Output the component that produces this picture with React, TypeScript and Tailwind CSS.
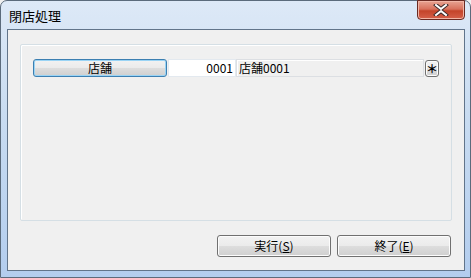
import React from 'react'

const jp = { fontFamily: '"MS UI Gothic", "Noto Sans CJK JP", sans-serif' }

function WinButton({ children, className = '', focused = false }: { children: React.ReactNode; className?: string; focused?: boolean }) {
  return (
    <button
      className={`flex items-center justify-center rounded-[3px] border text-[12px] text-black ${
        focused ? 'border-[#3c7fb1] shadow-[inset_0_0_0_1px_#9ad4f5]' : 'border-[#707070] shadow-[inset_0_0_0_1px_#fcfcfc]'
      } bg-[linear-gradient(to_bottom,#f2f2f2_0%,#ebebeb_48%,#dddddd_52%,#cfcfcf_100%)] ${className}`}
      style={jp}
    >
      {children}
    </button>
  )
}

export default function App() {
  return (
    <div className="w-[471px] h-[278px] bg-[#f0f0f0]">
      <div className="flex h-full w-full flex-col rounded-t-[7px] border border-[#5b6b7c] bg-[linear-gradient(to_bottom,#dde9f7_0%,#c9dcf1_40%,#b3cdee_100%)] pl-[6px] pr-[5px] pb-[6px]">
        {/* title bar */}
        <div className="relative flex h-[28px] shrink-0 items-center">
          <span className="pl-[2px] pt-[1px] text-[13px] text-black" style={jp}>
            閉店処理
          </span>
          <div className="absolute right-[0px] top-[-1px] flex h-[20px] w-[48px] items-center justify-center rounded-b-[4px] border border-[#6a2a22] bg-[linear-gradient(to_bottom,#e8a493_0%,#d8715c_45%,#c4442a_55%,#d5604a_100%)] shadow-[inset_0_0_0_1px_#f1b5a6]">
            <svg width="16" height="12" viewBox="0 0 16 12">
              <path d="M3 1 L8 5 L13 1 M3 11 L8 7 L13 11" fill="none" stroke="#3b2a2a" strokeWidth="4" strokeLinecap="square" />
              <path d="M3 1 L8 5 L13 1 M3 11 L8 7 L13 11" fill="none" stroke="#ffffff" strokeWidth="2" strokeLinecap="square" />
            </svg>
          </div>
        </div>
        {/* client area */}
        <div className="flex flex-1 flex-col border border-[#61748a] bg-[#f0f0f0] px-[12px] pt-[14px]">
          <div className="h-[177px] rounded-[2px] border border-[#d5dfe5] shadow-[inset_1px_1px_0_#ffffff] pl-[12px] pt-[14px]">
            <div className="flex items-center">
              <WinButton focused className="h-[18px] w-[134px]">
                店舗
              </WinButton>
              <div
                className="ml-[1px] flex h-[18px] w-[68px] items-center justify-end border border-[#e3e9ef] bg-white pr-[2px] text-[12px] text-black"
                style={jp}
              >
                0001
              </div>
              <div
                className="flex h-[18px] w-[188px] items-center border border-[#dcdfe3] bg-[#f0f0f0] pl-[2px] text-[12px] text-black shadow-[inset_1px_1px_0_#ffffff]"
                style={jp}
              >
                店舗0001
              </div>
              <WinButton className="ml-[1px] h-[17px] w-[14px] text-[12px] font-bold leading-none">
                <span className="pt-[1px]">＊</span>
              </WinButton>
            </div>
          </div>
          <div className="mt-[14px] flex justify-end gap-[6px] pr-[1px]">
            <WinButton className="h-[22px] w-[114px]">
              実行(<span className="underline">S</span>)
            </WinButton>
            <WinButton className="h-[22px] w-[114px]">
              終了(<span className="underline">E</span>)
            </WinButton>
          </div>
        </div>
      </div>
    </div>
  )
}
